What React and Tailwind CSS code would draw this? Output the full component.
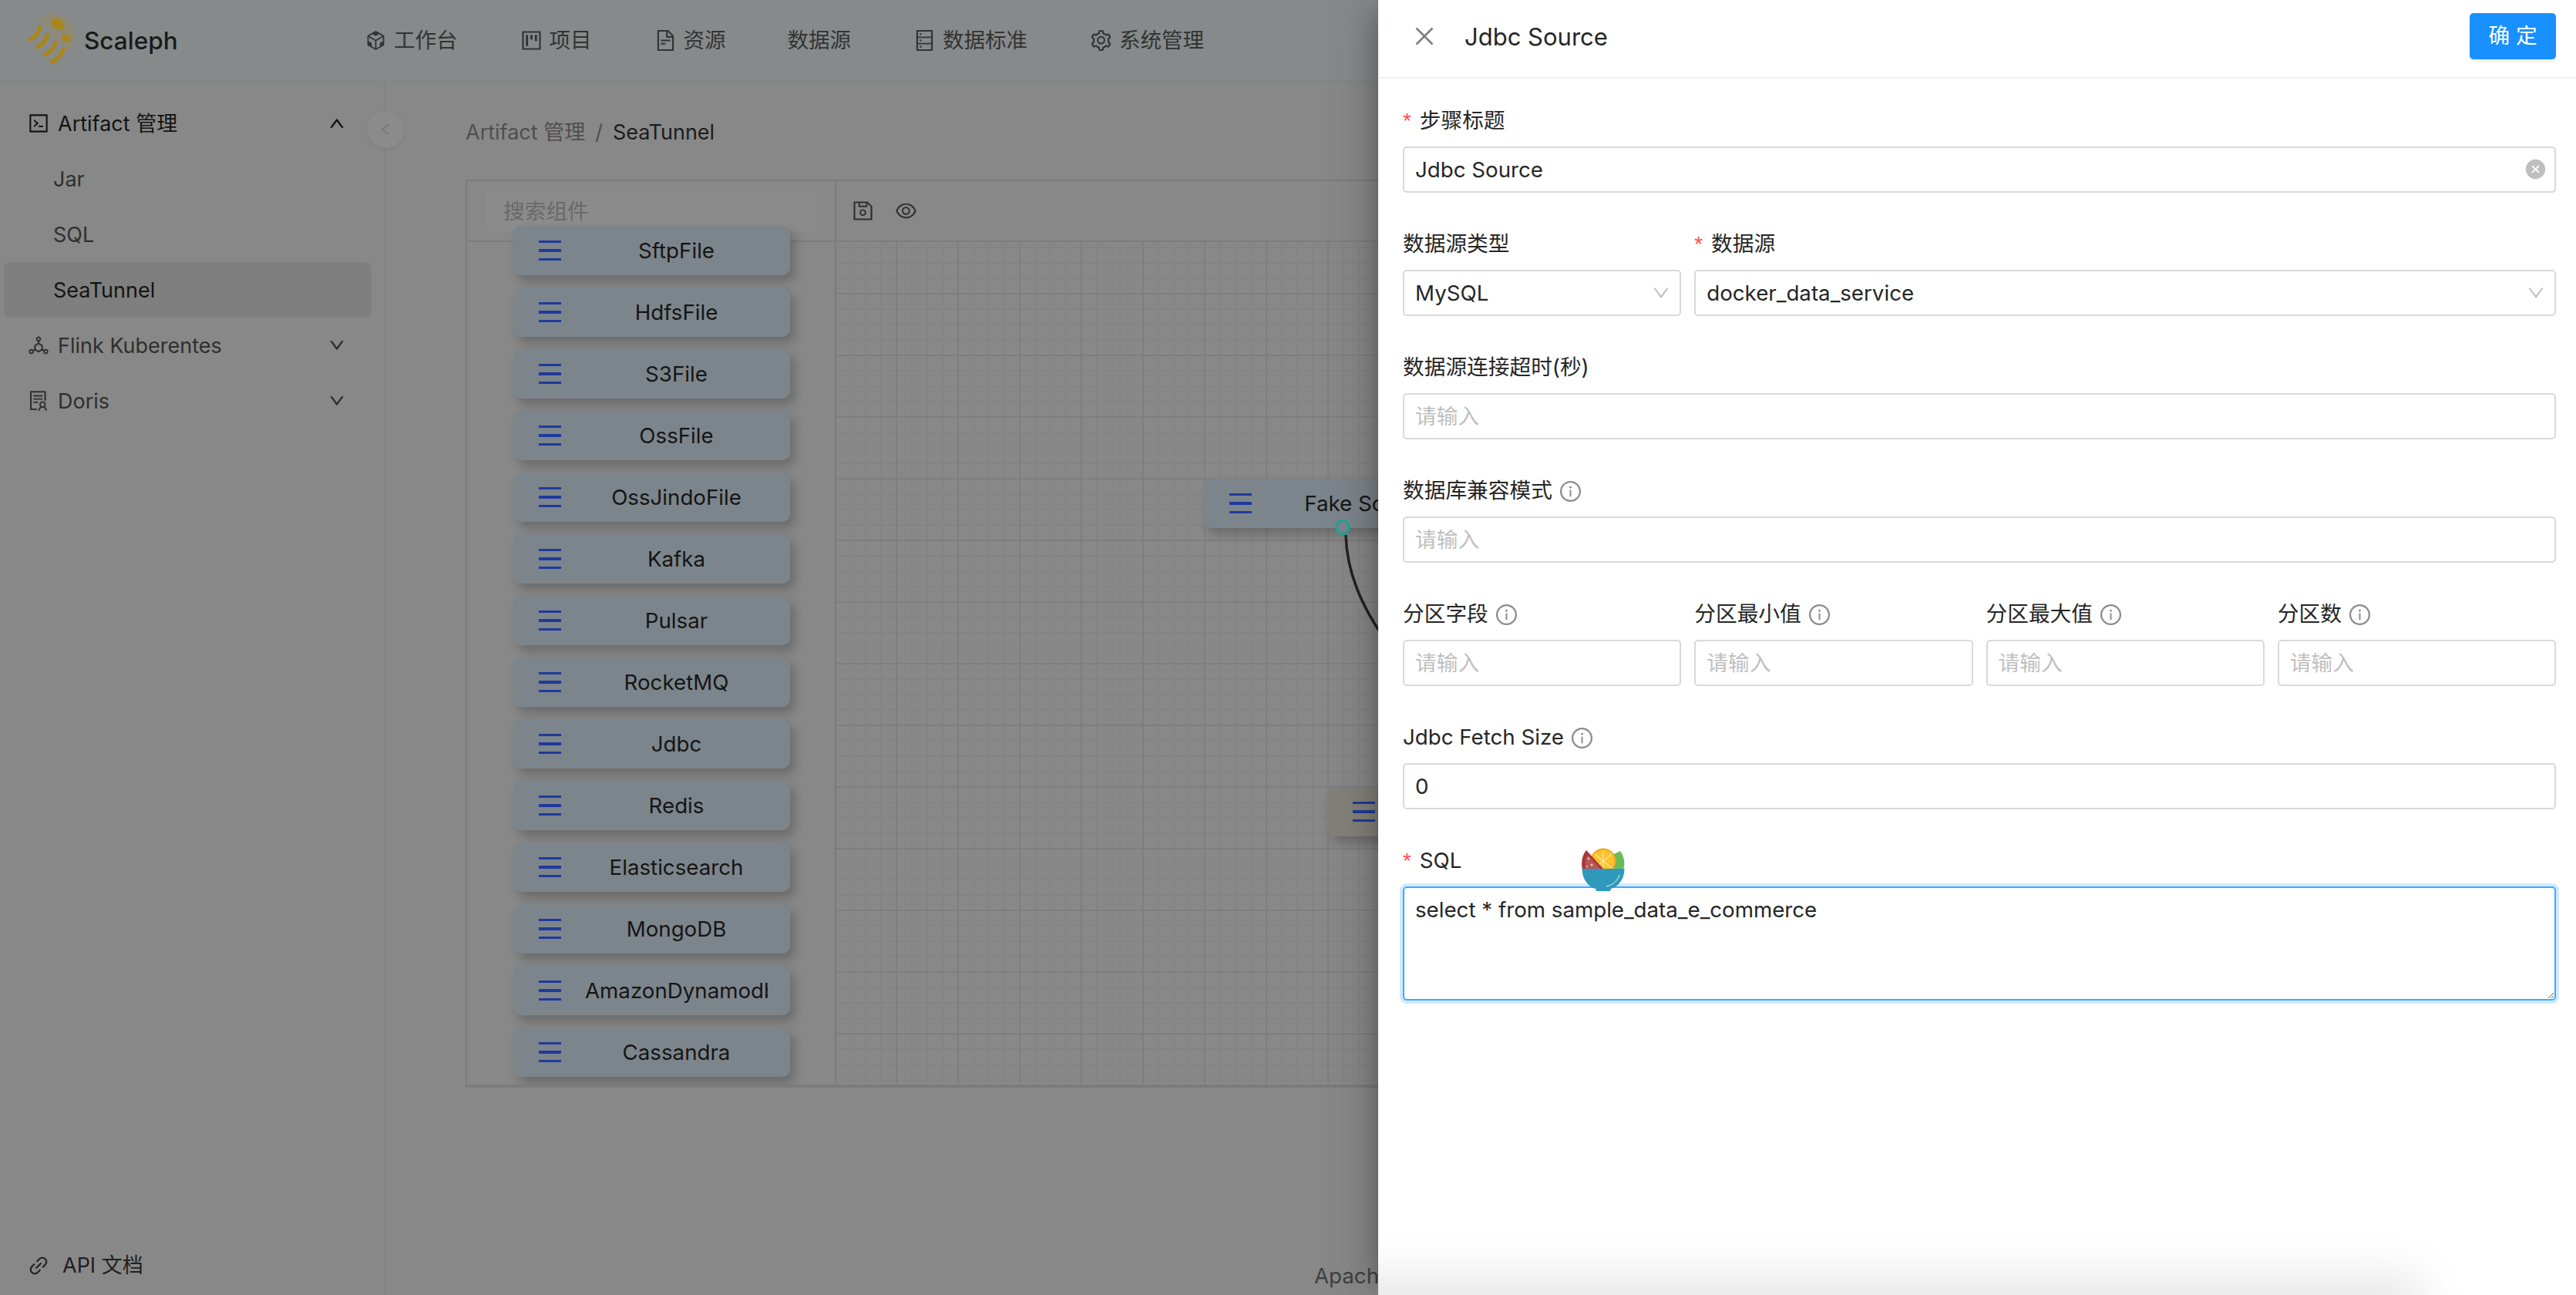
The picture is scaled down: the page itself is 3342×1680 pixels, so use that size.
import React from "react";
import {
  AiOutlineCodeSandbox, AiOutlineProject, AiOutlineFileText, AiOutlineDatabase, AiOutlineSetting,
  AiOutlineCode, AiOutlineUp, AiOutlineDown, AiOutlineLeft, AiOutlineDeploymentUnit, AiOutlineSolution,
  AiOutlineLink, AiOutlineSave, AiOutlineEye, AiOutlineClose, AiFillCloseCircle, AiOutlineInfoCircle,
} from "react-icons/ai";

function Logo() {
  return (
    <svg width="100" height="100" viewBox="0 0 100 100" className="absolute left-0 top-0">
      <defs>
        <pattern id="hatch" width="4" height="4" patternUnits="userSpaceOnUse" patternTransform="rotate(48)">
          <rect width="4" height="1.4" fill="#a08a4a" />
        </pattern>
      </defs>
      <path d="M50 25 A28 28 0 0 1 88 67 Z" fill="url(#hatch)" />
      <ellipse cx="75" cy="31" rx="9" ry="6.5" transform="rotate(40 75 31)" fill="#a9861c" />
      <ellipse cx="86" cy="49.5" rx="6" ry="4.5" transform="rotate(35 86 49.5)" fill="#a9861c" />
      <g fill="none" stroke="#a9861c" strokeWidth="5.5">
        <path d="M53 33 C49 43 47 49 37 51" />
        <path d="M63 43 C59 53 56 59 46 61" />
        <path d="M73 53 C69 63 66 69 56 71" />
        <path d="M83 62 C79 72 75 78 65 81" />
      </g>
    </svg>
  );
}

function Bowl() {
  return (
    <svg width="60" height="60" viewBox="0 0 60 60" className="absolute left-[262px] top-[1098px]">
      <path d="M44 10 L52 6 C57 13 59 22 56 30 H44 Z" fill="#6cbb5a" />
      <circle cx="30" cy="19" r="15.5" fill="#fcc22d" stroke="#f5a623" strokeWidth="2" />
      <g stroke="#ffe9a8" strokeWidth="1.2">
        <path d="M30 6 V30 M19 10 L41 28 M41 10 L19 28" />
      </g>
      <path d="M8 5 C2 12 1 22 3 30 H31 Z" fill="#a8373a" />
      <path d="M10 11 C6 16 6 23 7 30 H27 Z" fill="#b85555" />
      <g fill="#f1d2b5">
        <circle cx="11" cy="16" r="1.3" />
        <circle cx="15" cy="24" r="1.5" />
        <circle cx="9" cy="26" r="1.1" />
      </g>
      <path d="M2.5 29 H57.5 C57.5 42 50 52 40 55 L39 58 H21 L20 55 C10 52 2.5 42 2.5 29 Z" fill="#2f99bb" />
      <path d="M34 52 C43 50 49 44 51 37" stroke="#e6f4f8" strokeWidth="1" fill="none" />
    </svg>
  );
}

function Node({ name, color = "bg-[#7d858c]" }) {
  return (
    <div className={`flex h-16 w-[359px] shrink-0 items-center rounded-[10px] pl-[33px] shadow-[6px_8px_14px_rgba(0,0,0,0.22)] ${color}`}>
      <div className="flex w-[29px] shrink-0 flex-col gap-2">
        <span className="h-[3.5px] bg-[#1f3a9c]" />
        <span className="h-[3.5px] bg-[#1f3a9c]" />
        <span className="h-[3.5px] bg-[#1f3a9c]" />
      </div>
      <div className="ml-[31px] w-[237px] overflow-hidden whitespace-nowrap text-center text-[27.7px] leading-8 text-[#151515]">{name}</div>
    </div>
  );
}

function NavItem({ icon, label }) {
  return (
    <div className="flex items-center gap-[8px] px-[40px] text-[27.5px] text-[#333333]">
      {icon}
      <span>{label}</span>
    </div>
  );
}

function SideRow({ icon, label, chevron, dark }) {
  return (
    <div className={`flex h-[72px] items-center pl-[35px] pr-[50px] text-[27px] ${dark ? "text-[#141414]" : "text-[#2f2f2f]"}`}>
      {icon}
      <span className="ml-[10px] flex-1 pt-[3px]">{label}</span>
      {chevron}
    </div>
  );
}

function Label({ text, required, info }) {
  return (
    <div className="flex h-[68px] items-center pt-[2px] text-[27.7px] text-[#262626]">
      {required && <span className="mr-[11px] font-[Liberation_Sans,sans-serif] text-[#ff4d4f]">*</span>}
      <span>{text}</span>
      {info && <AiOutlineInfoCircle size={31} className="ml-[8px] text-[#8c8c8c]" />}
    </div>
  );
}

const inputCls = "h-[60px] w-full rounded-[5px] border-2 border-[#d9d9d9] bg-white px-[14px] text-[27.7px] text-[#262626] outline-none placeholder:text-[#bfbfbf]";

function Field({ label, required, info, value, className = "" }) {
  return (
    <div className={className}>
      <Label text={label} required={required} info={info} />
      <input className={inputCls} placeholder="请输入" defaultValue={value} readOnly />
    </div>
  );
}

function SelectField({ label, required, value, className = "" }) {
  return (
    <div className={className}>
      <Label text={label} required={required} />
      <div className="flex h-[60px] items-center justify-between rounded-[5px] border-2 border-[#d9d9d9] pl-[14px] pr-[11px] text-[27.7px] text-[#262626]">
        <span className="pt-[2px]">{value}</span>
        <AiOutlineDown size={26} className="text-[#bfbfbf]" />
      </div>
    </div>
  );
}

const nodes = ["SftpFile", "HdfsFile", "S3File", "OssFile", "OssJindoFile", "Kafka", "Pulsar", "RocketMQ", "Jdbc", "Redis", "Elasticsearch", "MongoDB", "AmazonDynamodb", "Cassandra"];
const boldChevron = { stroke: "currentColor", strokeWidth: 40 };

export default function App() {
  return (
    <div className="relative flex h-[1680px] w-[3342px] flex-col overflow-hidden bg-[#888888] font-[Inter,'Noto_Sans_CJK_SC',sans-serif]">
      <header className="flex h-[107px] shrink-0 items-center border-b-2 border-[#808485] bg-[#868a8b]">
        <div className="relative flex h-full w-[432px] shrink-0 items-center pl-[109px] text-[31.5px] font-medium text-[#1a1a1a]">
          <Logo />
          <span>Scaleph</span>
        </div>
        <NavItem icon={<AiOutlineCodeSandbox size={31} />} label="工作台" />
        <NavItem icon={<AiOutlineProject size={31} />} label="项目" />
        <NavItem icon={<AiOutlineFileText size={31} />} label="资源" />
        <NavItem label="数据源" />
        <NavItem icon={<AiOutlineDatabase size={31} />} label="数据标准" />
        <NavItem icon={<AiOutlineSetting size={31} />} label="系统管理" />
      </header>

      <div className="flex flex-1">
        <aside className="relative flex w-[500px] shrink-0 flex-col justify-between border-r-2 border-[#828282] pt-[17px]">
          <div>
            <SideRow dark icon={<AiOutlineCode size={30} />} label="Artifact 管理" chevron={<AiOutlineUp size={22} {...boldChevron} />} />
            <div className="flex h-[72px] items-center pl-[69px] pt-[3px] text-[27px] text-[#2f2f2f]">Jar</div>
            <div className="flex h-[72px] items-center pl-[69px] pt-[3px] text-[27px] text-[#2f2f2f]">SQL</div>
            <div className="ml-[5px] mr-[16px] flex h-[72px] items-center rounded-[8px] bg-[#7f7f7f] pl-[64px] pt-[3px] text-[27px] text-[#141414]">SeaTunnel</div>
            <SideRow icon={<AiOutlineDeploymentUnit size={30} />} label="Flink Kuberentes" chevron={<AiOutlineDown size={22} {...boldChevron} />} />
            <SideRow icon={<AiOutlineSolution size={30} />} label="Doris" chevron={<AiOutlineDown size={22} {...boldChevron} />} />
          </div>
          <div className="mb-[2px] flex h-[72px] items-center pl-[35px] text-[27px] text-[#202020]">
            <AiOutlineLink size={30} />
            <span className="ml-[16px]">API 文档</span>
          </div>
          <div className="absolute left-[476px] top-[37px] flex h-12 w-12 items-center justify-center rounded-full bg-[#8b8b8b] text-[#737373] shadow-[0_2px_6px_rgba(0,0,0,0.06)]">
            <AiOutlineLeft size={20} />
          </div>
        </aside>

        <main className="flex min-w-0 flex-1 flex-col pl-[104px]">
          <div className="mt-[45px] flex h-10 items-center text-[27px] text-[#4f4f4f]">
            <span>Artifact 管理</span>
            <span className="mx-[13px]">/</span>
            <span className="text-[#1c1c1c]">SeaTunnel</span>
          </div>
          <div className="mt-[41px] flex h-[1178px] w-[2700px] border-2 border-b-[4px] border-[#7c7c7c]">
            <div className="flex w-[479px] shrink-0 flex-col overflow-hidden border-r-2 border-[#7c7c7c]">
              <div className="flex h-[79px] shrink-0 items-center border-b-2 border-[#7c7c7c] pl-[24px]">
                <div className="flex h-[52px] w-[430px] items-center rounded-[6px] bg-[#8b8b8b] pl-[23px] pt-[2px] text-[27.7px] text-[#696969]">搜索组件</div>
              </div>
              <div className="-mt-[21px] flex flex-col gap-4 pl-[60px]">
                {nodes.map((n) => <Node key={n} name={n} />)}
              </div>
            </div>
            <div className="flex min-w-0 flex-1 flex-col">
              <div className="flex h-[79px] shrink-0 items-center gap-[25px] border-b-2 border-[#7c7c7c] pl-[19px] text-[#303030]">
                <AiOutlineSave size={31} />
                <AiOutlineEye size={31} />
              </div>
              <div className="relative flex-1 bg-[linear-gradient(#7e7e7e_2px,transparent_2px),linear-gradient(90deg,#7e7e7e_2px,transparent_2px),linear-gradient(#848484_2px,transparent_2px),linear-gradient(90deg,#848484_2px,transparent_2px)] bg-[size:80px_80px,80px_80px,20px_20px,20px_20px] bg-[position:77px_66px]">
                <div className="absolute left-[477px] top-[307px]"><Node name="Fake Source" /></div>
                <div className="absolute left-[637px] top-[707px]"><Node name="Jdbc Sink" color="bg-[#83817a]" /></div>
                <svg width="120" height="160" viewBox="0 0 120 160" className="absolute left-[640px] top-[356px]">
                  <path d="M21 24 C22 70 39 110 64 148" fill="none" stroke="#222222" strokeWidth="3.5" />
                  <circle cx="17" cy="14" r="8.5" fill="#7d858c" stroke="#27a295" strokeWidth="3.5" />
                </svg>
              </div>
            </div>
          </div>
          <div className="mt-auto pb-[7px] pl-[1101px] text-[27.7px] leading-9 text-[#3f3f3f]">Apache</div>
        </main>
      </div>

      <section className="absolute right-0 top-0 flex h-full w-[1554px] flex-col overflow-hidden bg-white shadow-[-13px_0_34px_-17px_rgba(0,0,0,0.35),-19px_0_60px_rgba(0,0,0,0.12)]">
        <div className="flex h-[102px] shrink-0 items-center border-b-2 border-[#f0f0f0] pb-[6px] pl-[43px] pr-[26px]">
          <AiOutlineClose size={34} className="text-[#808080]" />
          <span className="ml-[35px] flex-1 pt-[2px] text-[31px] text-[#262626]">Jdbc Source</span>
          <button className="h-[60px] w-[112px] rounded-[5px] bg-[#1890ff] text-[27.7px] text-white shadow-[0_4px_0_rgba(0,0,0,0.04)]">确 定</button>
        </div>

        <div className="relative flex flex-col gap-8 pl-[32px] pr-[26px] pt-[20px]">
          <div>
            <Label text="步骤标题" required />
            <div className="relative">
              <input className={inputCls} defaultValue="Jdbc Source" readOnly />
              <AiFillCloseCircle size={29} className="absolute right-[12px] top-[15px] text-[#bfbfbf]" />
            </div>
          </div>
          <div className="grid grid-cols-4 gap-x-[17px]">
            <SelectField label="数据源类型" value="MySQL" />
            <SelectField label="数据源" required value="docker_data_service" className="col-span-3" />
          </div>
          <Field label="数据源连接超时(秒)" />
          <Field label="数据库兼容模式" info />
          <div className="grid grid-cols-4 gap-x-[17px]">
            <Field label="分区字段" info />
            <Field label="分区最小值" info />
            <Field label="分区最大值" info />
            <Field label="分区数" info />
          </div>
          <Field label="Jdbc Fetch Size" info value="0" />
          <div>
            <Label text="SQL" required />
            <textarea
              readOnly
              defaultValue="select * from sample_data_e_commerce"
              className="block h-[148px] w-full rounded-[5px] border-2 border-[#40a9ff] px-[14px] py-[8px] text-[27.7px] text-[#262626] shadow-[0_0_0_4px_rgba(24,144,255,0.2)] outline-none"
            />
          </div>
        </div>
        <div className="pointer-events-none absolute -left-[60px] bottom-[-24px] h-[24px] w-[1390px] shadow-[0_0_60px_24px_rgba(0,0,0,0.1)]" />
      </section>
      <div className="pointer-events-none absolute right-0 top-0 h-full w-[1554px]"><Bowl /></div>
    </div>
  );
}
